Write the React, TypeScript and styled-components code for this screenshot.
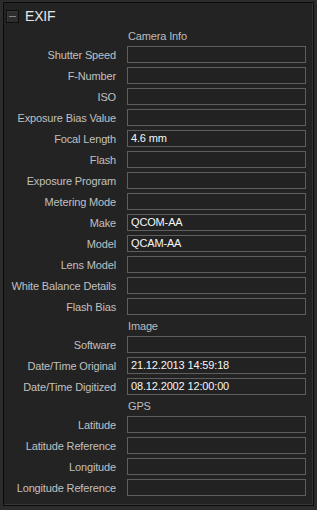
import React from "react";
import styled, { createGlobalStyle } from "styled-components";

const GlobalStyle = createGlobalStyle`
  html, body {
    margin: 0;
    padding: 0;
    background: #2c2c2c;
    font-family: "Liberation Sans", Arial, sans-serif;
  }
`;

type Row = { label: string; value?: string };
type Section = { title: string; rows: Row[] };

const sections: Section[] = [
  {
    title: "Camera Info",
    rows: [
      { label: "Shutter Speed" },
      { label: "F-Number" },
      { label: "ISO" },
      { label: "Exposure Bias Value" },
      { label: "Focal Length", value: "4.6 mm" },
      { label: "Flash" },
      { label: "Exposure Program" },
      { label: "Metering Mode" },
      { label: "Make", value: "QCOM-AA" },
      { label: "Model", value: "QCAM-AA" },
      { label: "Lens Model" },
      { label: "White Balance Details" },
      { label: "Flash Bias" },
    ],
  },
  {
    title: "Image",
    rows: [
      { label: "Software" },
      { label: "Date/Time Original", value: "21.12.2013 14:59:18" },
      { label: "Date/Time Digitized", value: "08.12.2002 12:00:00" },
    ],
  },
  {
    title: "GPS",
    rows: [
      { label: "Latitude" },
      { label: "Latitude Reference" },
      { label: "Longitude" },
      { label: "Longitude Reference" },
    ],
  },
];

const App = () => {
  return (
    <>
      <GlobalStyle />
      <Page>
        <Panel>
          <TitleBar>
            <Collapse>
              <span />
            </Collapse>
            <Title>EXIF</Title>
          </TitleBar>
          <Rows>
            {sections.map((s) => (
              <React.Fragment key={s.title}>
                <SectionHead>
                  <span />
                  <SectionTitle>{s.title}</SectionTitle>
                </SectionHead>
                {s.rows.map((r) => (
                  <FieldRow key={r.label}>
                    <Label>{r.label}</Label>
                    <Field>{r.value}</Field>
                  </FieldRow>
                ))}
              </React.Fragment>
            ))}
          </Rows>
        </Panel>
      </Page>
    </>
  );
};

const Page = styled.div`
  width: 317px;
  height: 510px;
  padding: 2px 3px 0 3px;
  box-sizing: border-box;
`;

const Panel = styled.div`
  border: 1px solid #0b0b0b;
  background: #232323;
  box-shadow: inset -1px -1px 0 #363636;
  padding: 0 7px 9px 0;
`;

const TitleBar = styled.div`
  display: flex;
  align-items: center;
  gap: 6px;
  height: 26px;
  padding: 0 0 0 2px;
`;

const Collapse = styled.div`
  width: 11px;
  height: 11px;
  border: 1px solid #0e0e0e;
  background: #2e2e2e;
  box-shadow: inset 1px 1px 0 #383838;
  display: flex;
  align-items: center;
  justify-content: center;

  span {
    width: 7px;
    height: 1px;
    background: #858585;
  }
`;

const Title = styled.div`
  color: #e6e6e6;
  font-size: 14px;
  letter-spacing: -0.2px;
`;

const Rows = styled.div`
  display: flex;
  flex-direction: column;
  gap: 4px;
`;

const FieldRow = styled.div`
  display: grid;
  grid-template-columns: 112px 179px;
  column-gap: 11px;
  height: 17px;
  align-items: center;
`;

const SectionHead = styled(FieldRow)`
  height: 13px;
`;

const SectionTitle = styled.div`
  color: #bdbdbd;
  font-size: 11px;
  letter-spacing: -0.15px;
  padding-left: 1px;
`;

const Label = styled.div`
  color: #c0c0c0;
  font-size: 11px;
  letter-spacing: -0.15px;
  text-align: right;
  white-space: nowrap;
`;

const Field = styled.div`
  height: 17px;
  box-sizing: border-box;
  border: 1px solid #5e5e5e;
  background: #222222;
  color: #f6f6f6;
  font-size: 11px;
  letter-spacing: -0.15px;
  line-height: 15px;
  padding-left: 3px;
  white-space: nowrap;
`;

export default App;
